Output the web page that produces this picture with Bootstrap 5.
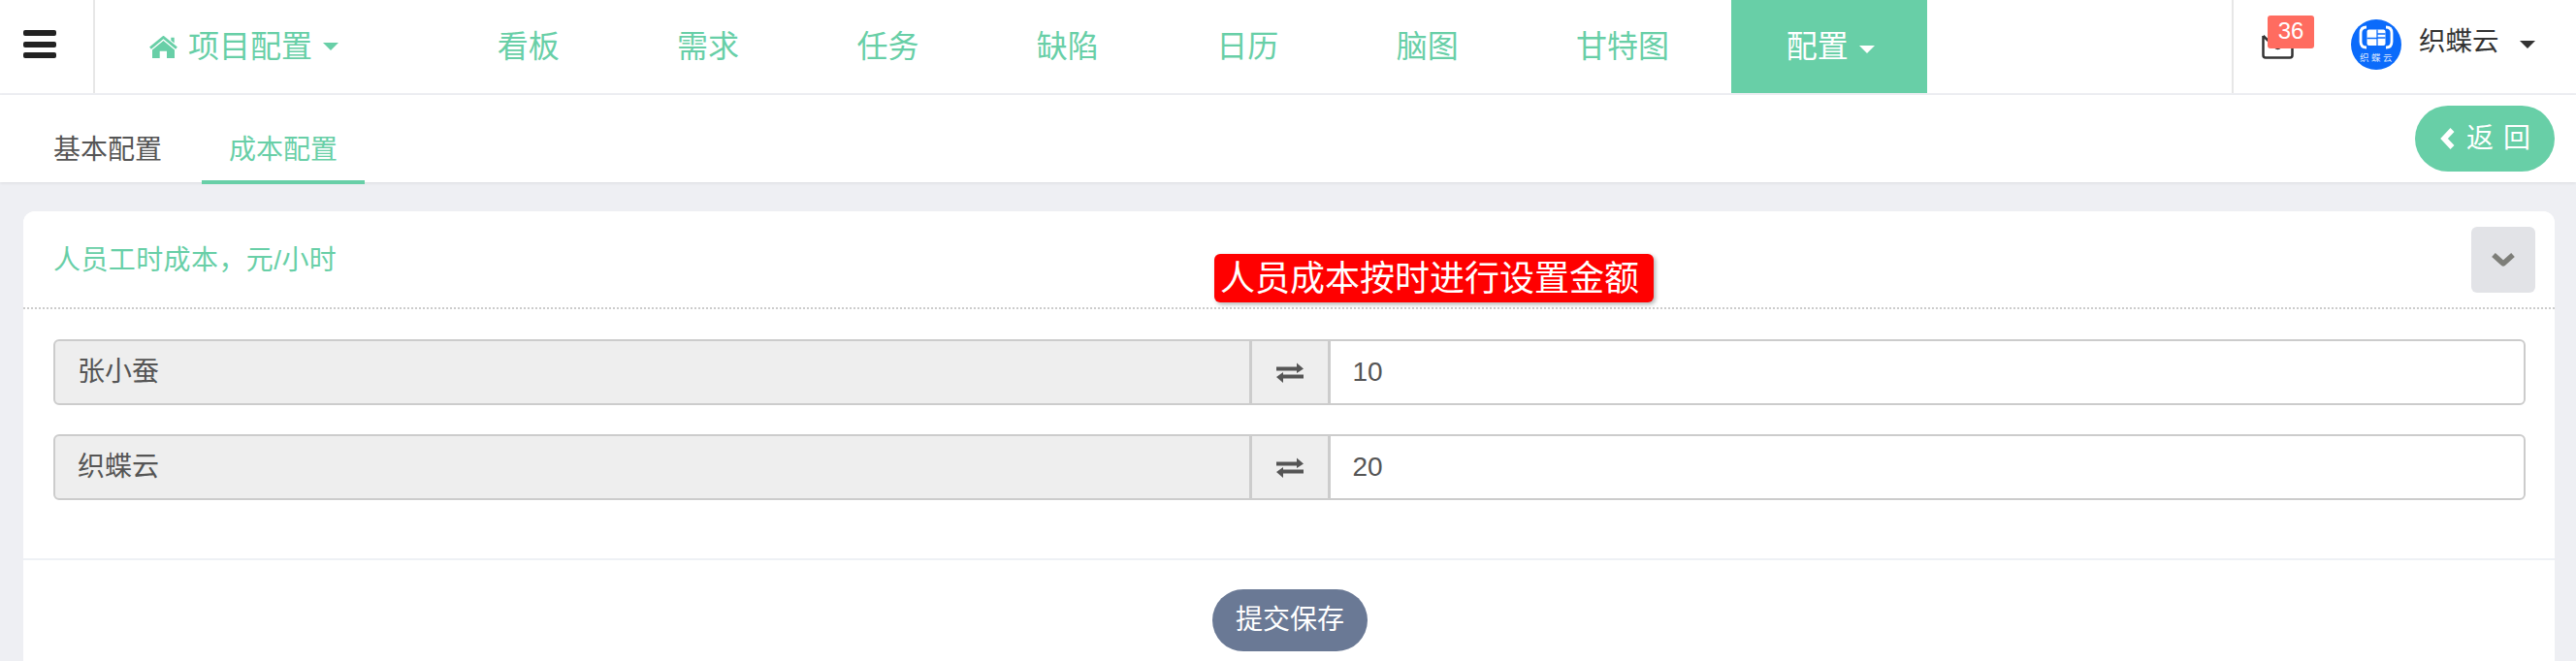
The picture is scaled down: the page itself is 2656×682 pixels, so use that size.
<!DOCTYPE html>
<html lang="zh">
<head>
    <meta charset="UTF-8">
    <meta name="viewport" content="width=device-width, initial-scale=1.0">
    <title>成本配置</title>
    <link href="https://cdn.jsdelivr.net/npm/bootstrap@5.3.3/dist/css/bootstrap.min.css" rel="stylesheet">
    <style>
        body { background: #eeeff3; font-family: "Liberation Sans", "Noto Sans CJK SC", sans-serif; color: #555; font-size: 28px; }
        .top-bar { height: 98px; background: #fff; border-bottom: 2px solid #eeeff3; }
        .menu-toggle { width: 98px; padding: 0 0 5px 24px; border-right: 2px solid #e7e7e7; }
        .menu-toggle span { display: block; width: 34px; height: 6px; border-radius: 2px; background: #222; margin-bottom: 5.5px; }
        .menu-toggle span:last-child { margin-bottom: 0; }
        .project-menu { width: 354px; padding-left: 56px; font-size: 32px; color: #68cfa7; gap: 11px; }
        .top-link { padding: 0 60.7px; font-size: 32px; color: #68cfa7; text-decoration: none; line-height: 96px; }
        .top-link.is-current { background: #68cfa7; color: #fff; padding: 0 0 0 57px; width: 202px; margin-left: 3px; }
        .arrow-down { display: inline-block; border: 8px solid transparent; border-top-color: currentColor; border-bottom: 0; vertical-align: middle; }
        .is-current .arrow-down { margin-left: 11px; }
        .user-area { width: 355px; border-left: 2px solid #e7e7e7; color: #333; }
        .mail-box { left: 29px; top: 35px; width: 33px; height: 26px; }
        .mail-count { left: 35px; top: 16px; width: 48px; height: 34px; background: #ff6c60; color: #fff; font-size: 24px; line-height: 32px; border-radius: 3px; text-align: center; }
        .user-logo { left: 121px; top: 20px; width: 52px; height: 52px; }
        .user-name { left: 191px; top: 22px; font-size: 27.5px; line-height: 42px; }
        .user-area .arrow-down { left: 295px; top: 42px; color: #333; }
        .sub-bar { height: 90px; background: #fff; box-shadow: 0 1px 3px rgba(0,0,0,.08); }
        .sub-tab { color: #555; text-decoration: none; padding: 35px 28px 0; height: 92px; line-height: 44px; font-size: 28px; }
        .sub-tab:hover { color: #555; }
        .sub-tab.is-current { color: #68cfa7; border-bottom: 4px solid #68cfa7; }
        .tabs-wrap { padding-left: 27px; gap: 13px; }
        .back-btn { background: #68cfa7; color: #fff; width: 144px; height: 68px; border-radius: 34px; border: 0; font-size: 28px; margin-right: 22px; padding: 0 0 0 25px; gap: 11px; }
        .back-btn span { letter-spacing: 10px; white-space: nowrap; }
        .back-btn:hover, .back-btn:active { background: #68cfa7 !important; color: #fff !important; }
        .page-main { padding: 30px 22px 0 24px; }
        .cost-card { border: 0; border-radius: 12px 12px 0 0; height: 464px; }
        .cost-head { height: 102px; background: #fff; border: 0; border-bottom: 2px dotted #ccc; padding: 0 20px 0 31px; color: #68cfa7; font-size: 28px; letter-spacing: .4px; border-radius: 12px 12px 0 0 !important; }
        .head-title { margin-top: 3px; }
        .fold-btn { width: 66px; height: 68px; background: #e2e3e7; border-radius: 6px; border: 0; padding: 0; }
        .fold-btn:hover, .fold-btn:active { background: #e2e3e7 !important; }
        .red-note { left: 1228px; top: 44px; width: 453px; height: 50px; padding-left: 6px; background: #f00; color: #fff; font-size: 36px; line-height: 52px; border-radius: 6px; box-shadow: 2px 2px 4px rgba(0,0,0,.3); white-space: nowrap; }
        .cost-body { padding: 31px 30px 0 31px; height: 257px; flex: none; }
        .cost-row { height: 68px; margin-bottom: 30px; }
        .cost-row .input-group-text, .cost-row .form-control { border: 2px solid #ccc; font-size: 28px; color: #555; border-radius: 6px; height: 68px; }
        .cost-row .input-group-text { background: #eee; }
        .name-cell { flex: 1 1 0; padding: 0 23px; }
        .swap-cell { width: 82px; justify-content: center; padding: 0; }
        .cost-row .form-control { flex: 1 1 0; padding: 0 23px; box-shadow: none; }
        .cost-foot { background: #fff; border-top: 2px solid #eef1f5; padding: 30px 0 10px 2px; border-radius: 0 !important; }
        .save-btn { background: #6a7995; color: #fff; width: 160px; height: 64px; border-radius: 32px; border: 0; font-size: 28px; padding: 0; }
        .save-btn:hover, .save-btn:active { background: #6a7995 !important; color: #fff !important; }
    </style>
</head>
<body>
    <div class="top-bar d-flex">
        <div class="menu-toggle d-flex flex-column justify-content-center"><span></span><span></span><span></span></div>
        <div class="project-menu d-flex align-items-center">
            <svg width="29" height="23" viewBox="0 0 29 23" fill="#68cfa7">
                <path d="M14.500 5 L3 14.500 V23 H10.700 V15.700 H18 V23 H26 V14.500 Z"/>
                <path d="M1 12.700 L14.500 1.500 L28 12.700" fill="none" stroke="#68cfa7" stroke-width="2.800"/>
                <path d="M22.300 1.700 h3.400 v5.800 l-3.400-2.800 Z"/>
            </svg>
            <span>项目配置</span>
            <span class="arrow-down"></span>
        </div>
        <a class="top-link" href="#">看板</a>
        <a class="top-link" href="#">需求</a>
        <a class="top-link" href="#">任务</a>
        <a class="top-link" href="#">缺陷</a>
        <a class="top-link" href="#">日历</a>
        <a class="top-link" href="#">脑图</a>
        <a class="top-link" href="#">甘特图</a>
        <a class="top-link is-current" href="#">配置<span class="arrow-down"></span></a>
        <div class="user-area ms-auto position-relative">
            <svg class="mail-box position-absolute" viewBox="0 0 33 26" fill="none" stroke="#333" stroke-width="2.500">
                <path d="M1.500 2 V22 Q1.500 24.500 4 24.500 H29 Q31.500 24.500 31.500 22 V2"/>
                <path d="M1.500 2 L13 13 Q16.500 17 20 13 L31.500 2"/>
            </svg>
            <span class="mail-count position-absolute">36</span>
            <svg class="user-logo position-absolute" viewBox="0 0 52 52">
                <circle cx="26" cy="26" r="26" fill="#0b6bfb"/>
                <path d="M16 8 Q10 8 10 14 V23 Q10 29 16 29 M36 8 Q42 8 42 14 V23 Q42 29 36 29" fill="none" stroke="#fff" stroke-width="2.800"/>
                <rect x="16.500" y="10.500" width="19" height="16.500" rx="2" fill="#fff"/>
                <path d="M27 10.500 V27 M16.500 19.500 H27 M27 15 H35.500 M27 19 H35.500" stroke="#0b6bfb" stroke-width="1.300" fill="none"/>
                <text x="27" y="43" text-anchor="middle" font-size="9.500" letter-spacing="2.500" fill="#dbe8ff" font-family="Noto Sans CJK SC">织蝶云</text>
            </svg>
            <span class="user-name position-absolute">织蝶云</span>
            <span class="arrow-down position-absolute"></span>
        </div>
    </div>

    <div class="sub-bar d-flex justify-content-between align-items-center">
        <div class="tabs-wrap d-flex align-self-start">
            <a class="sub-tab" href="#">基本配置</a>
            <a class="sub-tab is-current" href="#">成本配置</a>
        </div>
        <button type="button" class="btn back-btn d-flex align-items-center">
            <svg width="17" height="24" viewBox="0 0 17 24"><path d="M13.500 3 L5 12 L13.500 21" fill="none" stroke="#fff" stroke-width="5.500"/></svg>
            <span>返回</span>
        </button>
    </div>

    <div class="page-main">
        <div class="card cost-card position-relative">
            <div class="card-header cost-head d-flex justify-content-between align-items-center">
                <span class="head-title">人员工时成本，元/小时</span>
                <button type="button" class="btn fold-btn d-flex align-items-center justify-content-center">
                    <svg width="26" height="18" viewBox="0 0 26 18"><path d="M3 4 L13 13 L23 4" fill="none" stroke="#7d7e79" stroke-width="5.500" stroke-linejoin="round"/></svg>
                </button>
            </div>
            <div class="red-note position-absolute">人员成本按时进行设置金额</div>
            <div class="card-body cost-body">
                <div class="input-group cost-row">
                    <span class="input-group-text name-cell">张小蚕</span>
                    <span class="input-group-text swap-cell">
                        <svg width="28" height="21" viewBox="0 0 28 21" fill="#555"><path d="M0 4.500 H21 V.5 L28 6.500 L21 11 V8.500 H0 Z M28 12.500 V16.500 H7 V21 L0 15 L7 10 V12.500 Z"/></svg>
                    </span>
                    <input type="text" class="form-control" value="10">
                </div>
                <div class="input-group cost-row">
                    <span class="input-group-text name-cell">织蝶云</span>
                    <span class="input-group-text swap-cell">
                        <svg width="28" height="21" viewBox="0 0 28 21" fill="#555"><path d="M0 4.500 H21 V.5 L28 6.500 L21 11 V8.500 H0 Z M28 12.500 V16.500 H7 V21 L0 15 L7 10 V12.500 Z"/></svg>
                    </span>
                    <input type="text" class="form-control" value="20">
                </div>
            </div>
            <div class="card-footer cost-foot text-center">
                <button type="button" class="btn save-btn">提交保存</button>
            </div>
        </div>
    </div>
    <script src="https://cdn.jsdelivr.net/npm/bootstrap@5.3.3/dist/js/bootstrap.bundle.min.js"></script>
</body>
</html>
